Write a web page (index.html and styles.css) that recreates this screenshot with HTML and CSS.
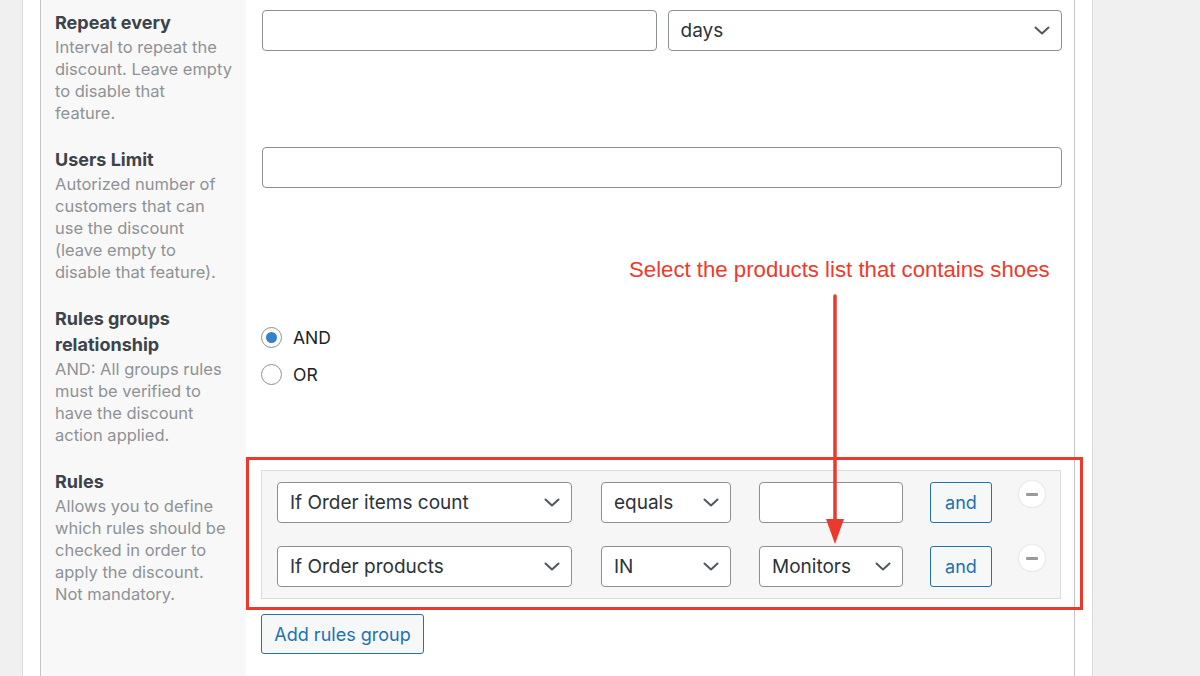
FILE: index.html
```html
<!DOCTYPE html>
<html lang="en">
<head>
<meta charset="utf-8">
<title>Discount settings</title>
<link rel="stylesheet" href="styles.css">
</head>
<body>
<div class="page">
  <div class="postbox">
    <div class="panel">
      <div class="form">
        <div class="th first">
          <div class="lbl">Repeat every</div>
          <div class="desc">Interval to repeat the<br>discount. Leave empty<br>to disable that<br>feature.</div>
        </div>
        <div class="td first">
          <div class="pair">
            <div class="input"></div>
            <div class="select"><span>days</span><svg class="chev" viewBox="0 0 16 9" width="16" height="9"><path d="M1.5 1.5 L8 7.5 L14.5 1.5" /></svg></div>
          </div>
        </div>

        <div class="th">
          <div class="lbl">Users Limit</div>
          <div class="desc">Autorized number of<br>customers that can<br>use the discount<br>(leave empty to<br>disable that feature).</div>
        </div>
        <div class="td">
          <div class="input"></div>
        </div>

        <div class="th">
          <div class="lbl">Rules groups<br>relationship</div>
          <div class="desc">AND: All groups rules<br>must be verified to<br>have the discount<br>action applied.</div>
        </div>
        <div class="td radios">
          <label class="radio"><span class="dot checked"></span>AND</label>
          <label class="radio"><span class="dot"></span>OR</label>
        </div>

        <div class="th last">
          <div class="lbl">Rules</div>
          <div class="desc">Allows you to define<br>which rules should be<br>checked in order to<br>apply the discount.<br>Not mandatory.</div>
        </div>
        <div class="td rules-cell">
          <div class="group-wrap">
            <div class="group">
              <div class="rule">
                <div class="select s-cond"><span>If Order items count</span><svg class="chev" viewBox="0 0 16 9" width="16" height="9"><path d="M1.5 1.5 L8 7.5 L14.5 1.5" /></svg></div>
                <div class="select s-op"><span>equals</span><svg class="chev" viewBox="0 0 16 9" width="16" height="9"><path d="M1.5 1.5 L8 7.5 L14.5 1.5" /></svg></div>
                <div class="input s-val"></div>
                <div class="btn and">and</div>
                <div class="minus"><span></span></div>
              </div>
              <div class="rule">
                <div class="select s-cond"><span>If Order products</span><svg class="chev" viewBox="0 0 16 9" width="16" height="9"><path d="M1.5 1.5 L8 7.5 L14.5 1.5" /></svg></div>
                <div class="select s-op"><span>IN</span><svg class="chev" viewBox="0 0 16 9" width="16" height="9"><path d="M1.5 1.5 L8 7.5 L14.5 1.5" /></svg></div>
                <div class="select s-val"><span>Monitors</span><svg class="chev" viewBox="0 0 16 9" width="16" height="9"><path d="M1.5 1.5 L8 7.5 L14.5 1.5" /></svg></div>
                <div class="btn and">and</div>
                <div class="minus"><span></span></div>
              </div>
            </div>
            <div class="highlight"></div>
          </div>
          <div class="btn add">Add rules group</div>
        </div>
      </div>
    </div>
  </div>

  <div class="note">Select the products list that contains shoes</div>
  <svg class="arrow" width="30" height="260" viewBox="0 0 30 260">
    <line x1="15" y1="2" x2="15" y2="228" />
    <polygon points="6,225 24,225 15,250" />
  </svg>
</div>
</body>
</html>
```

FILE: styles.css
```css
* { box-sizing: border-box; }

html, body {
  margin: 0;
  padding: 0;
  background: #f0f0f1;
  font-family: Inter, "Noto Sans", "Liberation Sans", sans-serif;
  color: #2c3338;
}

.page {
  position: relative;
  height: 676px;
  overflow: hidden;
}

.postbox {
  margin-left: 22px;
  width: 1071px;
  height: 676px;
  background: #fff;
  border-left: 1px solid #dcdcde;
  border-right: 1px solid #dcdcde;
  padding: 0 17px;
}

.panel {
  height: 100%;
  border-left: 1px solid #c3c4c7;
  border-right: 1px solid #c3c4c7;
  background: linear-gradient(to right, #f8f8f8 0, #f8f8f8 205px, #fff 205px);
}

.form {
  display: grid;
  grid-template-columns: 205px 1fr;
}

.th {
  padding: 12px 8px 11px 14px;
}
.th.first { padding-top: 10px; }

.lbl {
  font-size: 18px;
  line-height: 26px;
  font-weight: 700;
  color: #3c434a;
}

.desc {
  font-size: 16.5px;
  line-height: 22px;
  color: #8f9296;
  white-space: nowrap;
}

.td {
  padding: 12px 12px 11px 16px;
}
.td.first { padding-top: 10px; }

.pair {
  display: grid;
  grid-template-columns: 1fr 1fr;
  gap: 11px;
}

.input,
.select {
  height: 41px;
  border: 1px solid #8c8f94;
  border-radius: 4px;
  background: #fff;
}

.select {
  display: flex;
  align-items: center;
  justify-content: space-between;
  padding: 0 11px 0 12px;
  font-size: 19px;
  color: #2c3338;
}

.chev {
  flex: none;
  fill: none;
  stroke: #50575e;
  stroke-width: 2;
  stroke-linecap: round;
  stroke-linejoin: round;
}

.radios {
  padding-top: 25px;
}

.radio {
  display: flex;
  align-items: center;
  gap: 11px;
  height: 37px;
  font-size: 17.5px;
  color: #1d2327;
  margin-left: -1px;
}

.dot {
  width: 21px;
  height: 21px;
  border: 1px solid #8c8f94;
  border-radius: 50%;
  background: #fff;
  display: flex;
  align-items: center;
  justify-content: center;
}
.dot.checked::after {
  content: "";
  width: 11px;
  height: 11px;
  border-radius: 50%;
  background: #3582c4;
}

.rules-cell { padding-top: 13px; }

.group-wrap {
  position: relative;
  margin-left: -1px;
  margin-right: 1px;
}

.group {
  background: #f6f6f7;
  border: 1px solid #dcdcde;
  padding: 11px 14px 11px 15px;
  display: flex;
  flex-direction: column;
  gap: 23px;
}

.rule {
  display: flex;
  align-items: flex-start;
}

.s-cond { width: 295px; }
.s-op { width: 130px; margin-left: 29px; }
.s-val { width: 144px; margin-left: 28px; }

.btn {
  height: 41px;
  border: 1px solid #2271b1;
  border-radius: 3px;
  background: #f6f7f7;
  color: #2271b1;
  font-size: 18px;
  display: flex;
  align-items: center;
  justify-content: center;
}

.and {
  width: 62px;
  margin-left: 27px;
}

.minus {
  width: 26px;
  height: 26px;
  margin-left: 27px;
  margin-top: -1px;
  border-radius: 50%;
  background: #fff;
  box-shadow: 0 0 2px rgba(0, 0, 0, 0.18);
  display: flex;
  align-items: center;
  justify-content: center;
}
.minus span {
  width: 12px;
  height: 3px;
  border-radius: 1px;
  background: #9a9a9a;
}

.highlight {
  position: absolute;
  left: -15px;
  top: -13px;
  right: -22px;
  bottom: -11px;
  border: 3px solid #ea3a2e;
  pointer-events: none;
}

.add {
  width: 163px;
  height: 40px;
  margin-top: 15px;
  margin-left: -1px;
}

.note {
  position: absolute;
  left: 629px;
  top: 257px;
  font-family: "Liberation Sans", Arial, sans-serif;
  font-size: 22.2px;
  line-height: 26px;
  color: #ee3a2d;
  white-space: nowrap;
}

.arrow {
  position: absolute;
  left: 820px;
  top: 294px;
}
.arrow line {
  stroke: #ea3a2e;
  stroke-width: 3.5;
  stroke-linecap: round;
}
.arrow polygon {
  fill: #ea3a2e;
}
```
